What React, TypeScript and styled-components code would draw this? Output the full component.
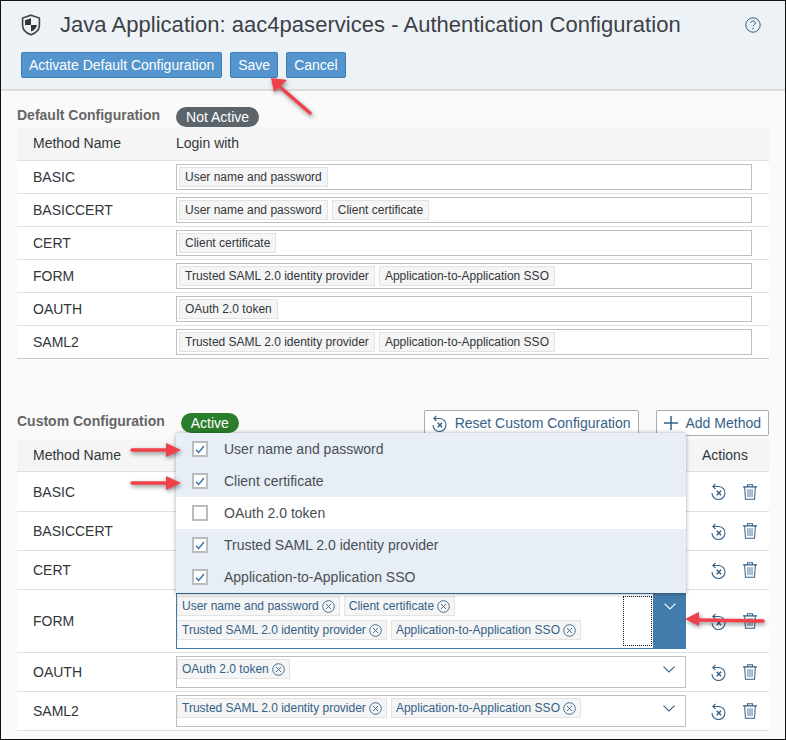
import styled, { createGlobalStyle } from 'styled-components'

const USER = 'User name and password'
const CERT = 'Client certificate'
const OAUTH = 'OAuth 2.0 token'
const SAML = 'Trusted SAML 2.0 identity provider'
const APP = 'Application-to-Application SSO'

const defaults = [
  { name: 'BASIC', tags: [USER] },
  { name: 'BASICCERT', tags: [USER, CERT] },
  { name: 'CERT', tags: [CERT] },
  { name: 'FORM', tags: [SAML, APP] },
  { name: 'OAUTH', tags: [OAUTH] },
  { name: 'SAML2', tags: [SAML, APP] },
]

// the first three rows sit under the open dropdown, so their chips never show
const methods = [
  { name: 'BASIC', tags: [] as string[], height: 40 },
  { name: 'BASICCERT', tags: [] as string[], height: 39 },
  { name: 'CERT', tags: [] as string[], height: 39 },
  { name: 'FORM', tags: [USER, CERT, SAML, APP], height: 63 },
  { name: 'OAUTH', tags: [OAUTH], height: 39 },
  { name: 'SAML2', tags: [SAML, APP], height: 39 },
]

const options = [
  { label: USER, checked: true, tinted: true },
  { label: CERT, checked: true, tinted: true },
  { label: OAUTH, checked: false, tinted: false },
  { label: SAML, checked: true, tinted: true },
  { label: APP, checked: true, tinted: true },
]

function ShieldIcon() {
  return (
    <svg width="20" height="22" viewBox="0 0 20 22">
      <path d="M10 1.2 18.4 4v7.2c0 4.400-3.400 7.800-8.400 9.600-5-1.800-8.400-5.200-8.400-9.600V4z" fill="none" stroke="#3f444a" strokeWidth="1.600" />
      <path d="M10 4.200 4 6.200V11h6zM10 11v6.600c3.200-1.300 5.600-3.600 6-6.600z" fill="#2f343a" />
    </svg>
  )
}

function HelpIcon() {
  return (
    <svg width="16" height="16" viewBox="0 0 16 16" fill="none" stroke="#346187" strokeWidth="1">
      <circle cx="8" cy="8" r="7.200" />
      <path d="M5.700 6.100c0-1.300 1-2.100 2.300-2.100s2.300.8 2.300 2c0 1.700-2.300 1.800-2.300 3.600" />
      <path d="M8 11v1.300" strokeWidth="1.200" />
    </svg>
  )
}

function ResetIcon() {
  return (
    <svg width="15" height="17" viewBox="0 0 15 17" fill="none" stroke="#346187" strokeWidth="1.100">
      <path d="M2 3.500h6a6.500 6.500 0 1 1-7 6.500" />
      <path d="M4.500.8 1.800 3.500l2.700 2.700" />
      <path d="m5.700 7.800 4.400 4.400M10.100 7.800l-4.400 4.400" strokeWidth="1.500" />
    </svg>
  )
}

function TrashIcon() {
  return (
    <svg width="14" height="16" viewBox="0 0 15 17" fill="none" stroke="#346187" strokeWidth="1.100">
      <path d="M0 3h15" strokeWidth="1.400" />
      <path d="M4.800 2.800V.8h5.400v2M1.800 3l.8 13.300h9.800L13.200 3" />
      <path d="M5.300 5.500v8.500M7.500 5.500v8.500M9.700 5.500v8.500" strokeWidth=".9" />
    </svg>
  )
}

function PlusIcon() {
  return (
    <svg width="14" height="14" viewBox="0 0 14 14" fill="none" stroke="#346187" strokeWidth="1.500">
      <path d="M7 0v14M0 7h14" />
    </svg>
  )
}

function CloseCircle() {
  return (
    <svg width="13" height="13" viewBox="0 0 13 13" fill="none" stroke="#346187" strokeWidth=".9">
      <circle cx="6.500" cy="6.500" r="5.800" />
      <path d="m4 4 5 5M9 4l-5 5" />
    </svg>
  )
}

function Chevron({ color = '#346187' }: { color?: string }) {
  return (
    <svg width="12" height="7" viewBox="0 0 12 7" fill="none" stroke={color} strokeWidth="1.100">
      <path d="M.5.700 6 6l5.500-5.300" />
    </svg>
  )
}

function CheckMark() {
  return (
    <svg width="10" height="9" viewBox="0 0 10 9" fill="none" stroke="#346fb0" strokeWidth="1.400">
      <path d="m1 4.800 2.700 2.700L9 1" />
    </svg>
  )
}

function RedArrow({ x, y, w, h, d, tip }: { x: number; y: number; w: number; h: number; d: string; tip: string }) {
  return (
    <ArrowSvg width={w} height={h} viewBox={`0 0 ${w} ${h}`} style={{ left: x, top: y }}>
      <path d={d} stroke="#f0414b" strokeWidth="3.500" strokeLinecap="round" fill="none" />
      <path d={tip} fill="#f0414b" />
    </ArrowSvg>
  )
}

export default function App() {
  return (
    <Page>
      <GlobalStyle />
      <Header>
        <TitleRow>
          <TitleGroup>
            <ShieldIcon />
            <Title>Java Application: aac4paservices - Authentication Configuration</Title>
          </TitleGroup>
          <HelpIcon />
        </TitleRow>
        <Toolbar>
          <PrimaryButton>Activate Default Configuration</PrimaryButton>
          <PrimaryButton>Save</PrimaryButton>
          <PrimaryButton>Cancel</PrimaryButton>
        </Toolbar>
      </Header>

      <Content>
        <SectionHead>
          <SectionTitle>Default Configuration</SectionTitle>
          <Badge $tone="#5b636b">Not Active</Badge>
        </SectionHead>
        <HeadRow $custom={false}>
          <span>Method Name</span>
          <span>Login with</span>
        </HeadRow>
        {defaults.map((row) => (
          <DefaultRow key={row.name}>
            <span>{row.name}</span>
            <ReadonlyInput>
              {row.tags.map((tag) => (
                <ReadonlyTag key={tag}>{tag}</ReadonlyTag>
              ))}
            </ReadonlyInput>
          </DefaultRow>
        ))}

        <CustomHead>
          <SectionHead $nested>
            <SectionTitle>Custom Configuration</SectionTitle>
            <Badge $tone="#2b7d2b">Active</Badge>
          </SectionHead>
          <HeadActions>
            <OutlineButton>
              <ResetIcon />
              Reset Custom Configuration
            </OutlineButton>
            <OutlineButton>
              <PlusIcon />
              Add Method
            </OutlineButton>
          </HeadActions>
        </CustomHead>
        <HeadRow $custom>
          <span>Method Name</span>
          <span />
          <ActionsLabel>Actions</ActionsLabel>
        </HeadRow>
        {methods.map((row) => {
          const open = row.name === 'FORM'
          return (
            <CustomRow key={row.name} $height={row.height}>
              <span>{row.name}</span>
              <ComboInput $open={open}>
                <TagArea>
                  {row.tags.map((tag) => (
                    <EditTag key={tag}>
                      {tag}
                      <CloseCircle />
                    </EditTag>
                  ))}
                </TagArea>
                {open && <FocusOutline />}
                <Toggle $open={open}>
                  <Chevron color={open ? '#ffffff' : '#346187'} />
                </Toggle>
              </ComboInput>
              <RowActions>
                <ResetIcon />
                <TrashIcon />
              </RowActions>
            </CustomRow>
          )
        })}
      </Content>

      <Dropdown>
        {options.map((option) => (
          <Option key={option.label} $tinted={option.tinted}>
            <CheckBox>{option.checked && <CheckMark />}</CheckBox>
            {option.label}
          </Option>
        ))}
      </Dropdown>

      <RedArrow x={267} y={74} w={48} h={44} d="M42 38 12 12" tip="M3 3 19 5 6 17z" />
      <RedArrow x={127} y={440} w={56} h={18} d="M4 9h36" tip="M53 9 38 2v14z" />
      <RedArrow x={127} y={473} w={56} h={18} d="M4 9h36" tip="M53 9 38 2v14z" />
      <RedArrow x={679} y={609} w={88} h={20} d="M83 11 18 10" tip="M5 9 19 2v14z" />
    </Page>
  )
}

const GlobalStyle = createGlobalStyle`
  html,
  body {
    margin: 0;
    padding: 0;
    background: #ffffff;
  }
`

const Page = styled.div`
  position: relative;
  width: 786px;
  height: 740px;
  box-sizing: border-box;
  overflow: hidden;
  border: 1px solid #111111;
  background: #fafafa;
  color: #32363a;
  font-family: 'Liberation Sans', Arial, sans-serif;
  font-size: 14px;
`

const Header = styled.header`
  height: 90px;
  box-sizing: border-box;
  padding: 12px 20px 0 20px;
  background: #edf2f7;
  border-bottom: 2px solid #dcdcdc;
`

const TitleRow = styled.div`
  display: flex;
  align-items: center;
  justify-content: space-between;
  height: 24px;
  padding-right: 4px;
`

const TitleGroup = styled.div`
  display: flex;
  align-items: center;
  gap: 19px;
`

const Title = styled.h1`
  margin: 0;
  font-size: 22px;
  font-weight: 400;
  line-height: 24px;
  letter-spacing: 0.03px;
  color: #3d4146;
`

const Toolbar = styled.div`
  display: flex;
  gap: 8px;
  margin-top: 15px;
`

const PrimaryButton = styled.button`
  height: 26px;
  padding: 0 7px;
  border: 1px solid #3f7fb8;
  border-radius: 2px;
  background: #5495cd;
  color: #ffffff;
  font: 14px 'Liberation Sans', Arial, sans-serif;
`

const Content = styled.main`
  display: flex;
  flex-direction: column;
  padding: 0 16px;
`

const SectionHead = styled.div<{ $nested?: boolean }>`
  display: flex;
  align-items: flex-end;
  gap: 16px;
  height: 23px;
  margin-top: ${({ $nested }) => ($nested ? '0' : '13px')};
`

const SectionTitle = styled.h2`
  align-self: center;
  margin: 0 0 2px;
  font-size: 14px;
  font-weight: 700;
  color: #666666;
`

const Badge = styled.span<{ $tone: string }>`
  display: inline-flex;
  align-items: center;
  height: 20px;
  padding: 0 10px;
  border-radius: 10px;
  background: ${({ $tone }) => $tone};
  color: #ffffff;
  font-size: 14px;
`

const HeadRow = styled.div<{ $custom: boolean }>`
  display: grid;
  grid-template-columns: ${({ $custom }) => ($custom ? '143px 510px 83px' : '143px 1fr')};
  align-items: center;
  height: ${({ $custom }) => ($custom ? '33px' : '34px')};
  box-sizing: border-box;
  padding: ${({ $custom }) => ($custom ? '0 0 0 16px' : '0 0 2px 16px')};
  background: #f5f5f5;
  border-bottom: 1px solid #e0e0e0;
`

const DefaultRow = styled.div`
  display: grid;
  grid-template-columns: 143px 576px;
  align-items: center;
  height: 33px;
  box-sizing: border-box;
  padding-left: 16px;
  background: #ffffff;
  border-bottom: 1px solid #e0e0e0;

  &:nth-of-type(8) {
    border-bottom-color: #c8c8c8;
  }
`

const ReadonlyInput = styled.div`
  display: flex;
  align-items: center;
  gap: 4px;
  height: 26px;
  box-sizing: border-box;
  padding: 0 2px;
  border: 1px solid #bfbfbf;
  background: #ffffff;
`

const ReadonlyTag = styled.span`
  display: inline-flex;
  align-items: center;
  height: 20px;
  box-sizing: border-box;
  padding: 0 5px;
  border: 1px solid #e3e3e3;
  background: #f5f5f5;
  font-size: 12px;
`

const CustomHead = styled.div`
  display: flex;
  align-items: flex-start;
  justify-content: space-between;
  height: 26px;
  margin-top: 51px;
  margin-bottom: 3px;
`

const HeadActions = styled.div`
  display: flex;
  gap: 17px;
`

const OutlineButton = styled.button`
  display: flex;
  align-items: center;
  gap: 8px;
  height: 26px;
  padding: 0 7px;
  border: 1px solid #ababab;
  border-radius: 2px;
  background: #ffffff;
  color: #346187;
  font: 14px 'Liberation Sans', Arial, sans-serif;
`

const ActionsLabel = styled.span`
  padding-left: 16px;
`

const CustomRow = styled.div<{ $height: number }>`
  display: grid;
  grid-template-columns: 143px 510px 83px;
  align-items: center;
  height: ${({ $height }) => $height}px;
  box-sizing: border-box;
  padding-left: 16px;
  background: #ffffff;
  border-bottom: 1px solid #e0e0e0;
`

const ComboInput = styled.div<{ $open: boolean }>`
  position: relative;
  display: flex;
  height: ${({ $open }) => ($open ? '56px' : '32px')};
  box-sizing: border-box;
  border: 1px solid ${({ $open }) => ($open ? '#3f7aad' : '#bfbfbf')};
  background: #ffffff;
`

const TagArea = styled.div`
  display: flex;
  flex: 1;
  flex-wrap: wrap;
  align-content: flex-start;
  gap: 4px;
  padding: 2px 0;
`

const EditTag = styled.span`
  display: inline-flex;
  align-items: center;
  gap: 3px;
  height: 20px;
  box-sizing: border-box;
  padding: 0 4px;
  border: 1px solid #e3e3e3;
  background: #f5f5f5;
  color: #346187;
  font-size: 12px;
`

const FocusOutline = styled.span`
  position: absolute;
  top: 2px;
  right: 33px;
  width: 27px;
  height: 48px;
  border: 1px dotted #111111;
`

const Toggle = styled.span<{ $open: boolean }>`
  display: flex;
  justify-content: center;
  width: 33px;
  margin: ${({ $open }) => ($open ? '-1px -1px -1px 0' : '0')};
  padding-top: ${({ $open }) => ($open ? '10px' : '9px')};
  background: ${({ $open }) => ($open ? '#427cac' : 'transparent')};
`

const RowActions = styled.div`
  display: flex;
  align-items: center;
  gap: 17px;
  padding-left: 25px;
`

const Dropdown = styled.ul`
  position: absolute;
  left: 175px;
  top: 432px;
  width: 510px;
  margin: 0;
  padding: 0;
  list-style: none;
  background: #ffffff;
  border-radius: 3px 3px 0 0;
  overflow: hidden;
  border-bottom: 1px solid #346187;
  box-shadow: 0 0 4px rgba(0, 0, 0, 0.35);
`

const Option = styled.li<{ $tinted: boolean }>`
  display: flex;
  align-items: center;
  gap: 16px;
  height: 32px;
  padding-left: 16px;
  background: ${({ $tinted }) => ($tinted ? '#e8eef6' : '#ffffff')};
  color: #4a4e52;
`

const CheckBox = styled.span`
  display: flex;
  align-items: center;
  justify-content: center;
  width: 16px;
  height: 16px;
  box-sizing: border-box;
  border: 2px solid #bcbcbc;
  background: #ffffff;
`

const ArrowSvg = styled.svg`
  position: absolute;
  filter: drop-shadow(1px 2px 2px rgba(0, 0, 0, 0.45));
`
